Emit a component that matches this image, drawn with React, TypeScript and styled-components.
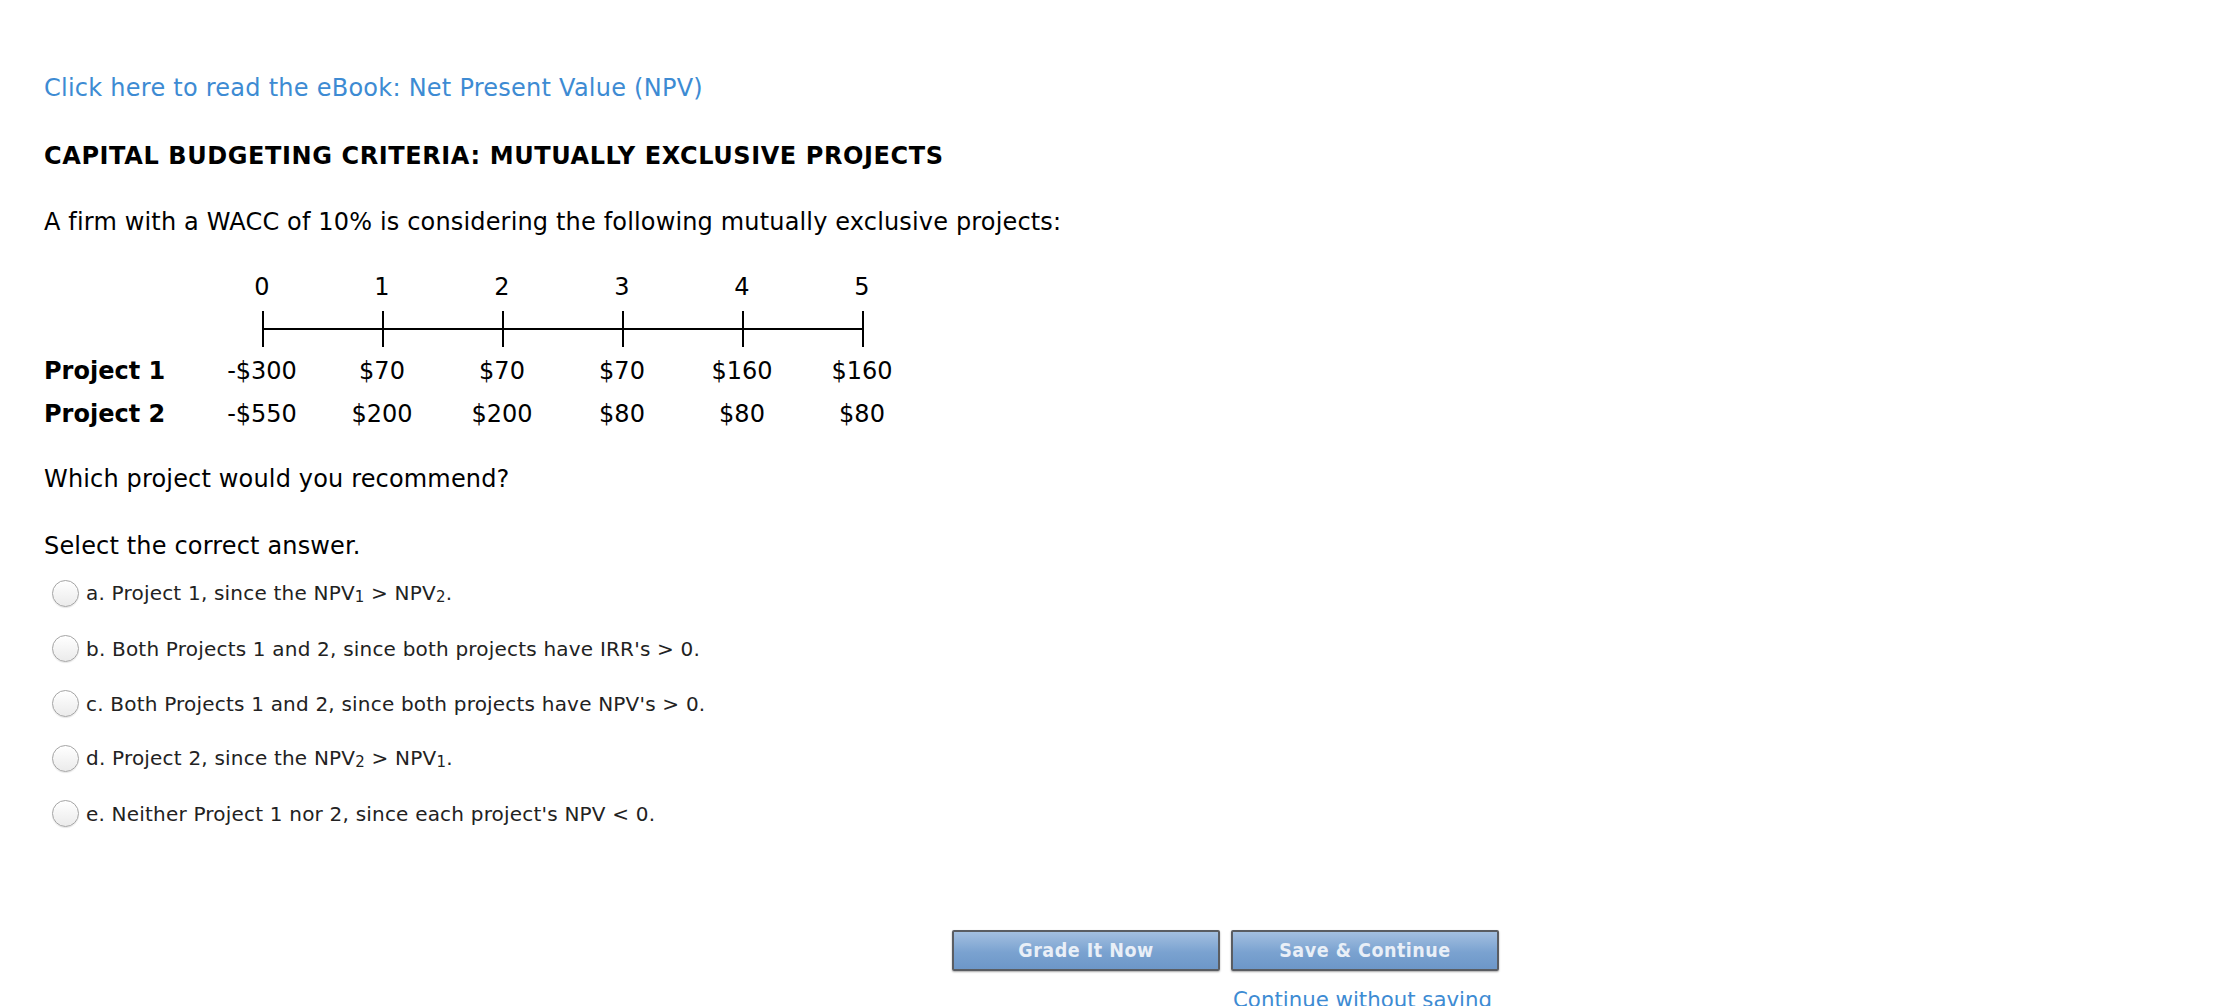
import styled, { createGlobalStyle } from "styled-components";

const GlobalStyle = createGlobalStyle`
  body {
    margin: 0;
    background: #fff;
    font-family: "DejaVu Sans", Verdana, sans-serif;
    color: #000;
  }
`;

// Whole page frame.
const Page = styled.div`
  padding: 75px 44px 0;
`;

// Blue text link.
const Link = styled.a`
  display: block;
  color: #3d8bd3;
  text-decoration: none;
  font-size: 24px;
  letter-spacing: 0.25px;
  line-height: 27px;
  cursor: pointer;
`;

// Section title.
const Heading = styled.div`
  margin-top: 41px;
  font-size: 24px;
  letter-spacing: 0.6px;
  font-weight: bold;
  line-height: 27px;
`;

// Plain paragraph.
const Paragraph = styled.div<{ $gap: number }>`
  margin-top: ${(p) => p.$gap}px;
  font-size: 24px;
  letter-spacing: 0.16px;
  line-height: 27px;
`;

// Cash flow table.
const FlowTable = styled.div`
  margin-top: 38px;
  display: grid;
  grid-template-columns: 158px repeat(6, 120px);
  font-size: 24px;
`;

const Cell = styled.div<{ $bold?: boolean }>`
  height: 43px;
  line-height: 43px;
  text-align: ${(p) => (p.$bold ? "left" : "center")};
  font-weight: ${(p) => (p.$bold ? "bold" : "normal")};
  white-space: nowrap;
`;

const PeriodCell = styled.div`
  line-height: 27px;
  text-align: center;
`;

const TimelineCell = styled.div`
  grid-column: 2 / span 6;
  height: 36px;
  margin: 10px 0 3px;
`;

// Answer choices.
const Choices = styled.div`
  margin-top: 6px;
  display: flex;
  flex-direction: column;
`;

const Choice = styled.label`
  display: flex;
  align-items: center;
  height: 55px;
  padding-left: 8px;
  font-size: 20px;
  letter-spacing: 0.2px;
  color: #222;
`;

const Radio = styled.span`
  width: 25px;
  height: 25px;
  border-radius: 50%;
  border: 1px solid #a4a4a4;
  background: linear-gradient(#ffffff, #ebebeb);
  box-shadow: inset 0 1px 1px rgba(255, 255, 255, 0.9), 0 1px 1px rgba(0, 0, 0, 0.1);
  margin-right: 7px;
  flex-shrink: 0;
`;

const ChoiceText = styled.span`
  sub {
    font-size: 0.75em;
    vertical-align: -0.12em;
  }
`;

// Buttons at the bottom.
const ButtonBar = styled.div`
  margin-top: 89px;
  width: 1455px;
  display: flex;
  justify-content: flex-end;
  gap: 11px;
`;

const ButtonColumn = styled.div`
  width: 268px;
  display: flex;
  flex-direction: column;
`;

const Button = styled.button`
  width: 268px;
  height: 41px;
  border: 2px solid #5a5d62;
  border-radius: 2px;
  background: linear-gradient(#a3bfe0, #7aa2d0 55%, #6d97c8);
  box-shadow: 0 1px 2px rgba(0, 0, 0, 0.35);
  color: #e9eff7;
  font-family: "DejaVu Sans Condensed", "DejaVu Sans", sans-serif;
  font-weight: bold;
  font-size: 19.5px;
  letter-spacing: 0.5px;
  padding: 0;
`;

const SubLink = styled(Link)`
  margin-top: 15px;
  padding-left: 2px;
  font-size: 21.3px;
  letter-spacing: 0;
  white-space: nowrap;
`;

const periods = [0, 1, 2, 3, 4, 5];
const projects = [
  { name: "Project 1", flows: ["-$300", "$70", "$70", "$70", "$160", "$160"] },
  { name: "Project 2", flows: ["-$550", "$200", "$200", "$80", "$80", "$80"] },
];

const choices = [
  <>a. Project 1, since the NPV<sub>1</sub> &gt; NPV<sub>2</sub>.</>,
  <>b. Both Projects 1 and 2, since both projects have IRR's &gt; 0.</>,
  <>c. Both Projects 1 and 2, since both projects have NPV's &gt; 0.</>,
  <>d. Project 2, since the NPV<sub>2</sub> &gt; NPV<sub>1</sub>.</>,
  <>e. Neither Project 1 nor 2, since each project's NPV &lt; 0.</>,
];

function Timeline() {
  return (
    <svg width="720" height="36" viewBox="0 0 720 36">
      <line x1="60" y1="18" x2="661" y2="18" stroke="#000" strokeWidth="2" />
      {periods.map((p) => (
        <line key={p} x1={61 + p * 120} y1="0" x2={61 + p * 120} y2="36" stroke="#000" strokeWidth="2" />
      ))}
    </svg>
  );
}

export default function App() {
  return (
    <Page>
      <GlobalStyle />
      <Link>Click here to read the eBook: Net Present Value (NPV)</Link>
      <Heading>CAPITAL BUDGETING CRITERIA: MUTUALLY EXCLUSIVE PROJECTS</Heading>
      <Paragraph $gap={39}>
        A firm with a WACC of 10% is considering the following mutually exclusive projects:
      </Paragraph>
      <FlowTable>
        <div />
        {periods.map((p) => (
          <PeriodCell key={p}>{p}</PeriodCell>
        ))}
        <TimelineCell>
          <Timeline />
        </TimelineCell>
        {projects.map((proj) => [
          <Cell $bold key={proj.name}>{proj.name}</Cell>,
          ...proj.flows.map((f, i) => <Cell key={proj.name + i}>{f}</Cell>),
        ])}
      </FlowTable>
      <Paragraph $gap={30}>Which project would you recommend?</Paragraph>
      <Paragraph $gap={40}>Select the correct answer.</Paragraph>
      <Choices>
        {choices.map((c, i) => (
          <Choice key={i}>
            <Radio />
            <ChoiceText>{c}</ChoiceText>
          </Choice>
        ))}
      </Choices>
      <ButtonBar>
        <ButtonColumn>
          <Button>Grade It Now</Button>
        </ButtonColumn>
        <ButtonColumn>
          <Button>Save &amp; Continue</Button>
          <SubLink>Continue without saving</SubLink>
        </ButtonColumn>
      </ButtonBar>
    </Page>
  );
}
